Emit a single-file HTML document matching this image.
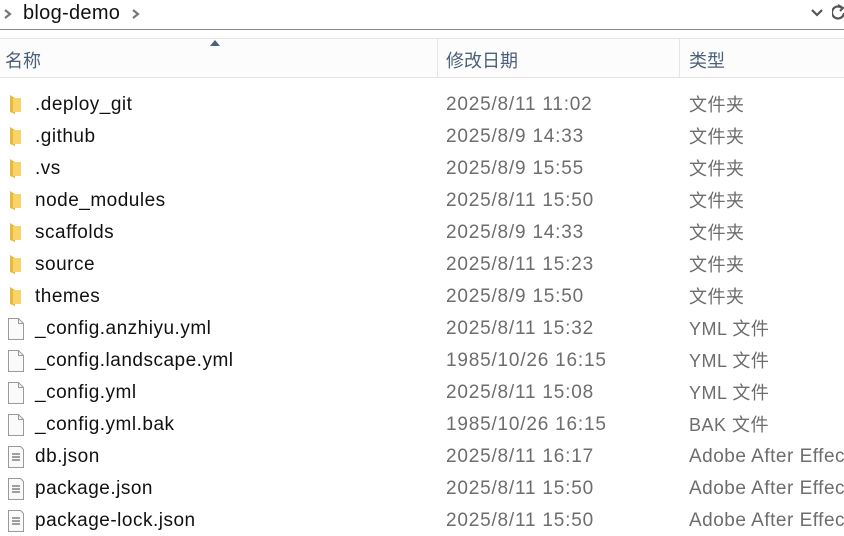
<!DOCTYPE html>
<html><head><meta charset="utf-8"><style>
body{margin:0;width:844px;height:536px;overflow:hidden;background:#fff;font-family:"Liberation Sans","Noto Sans CJK SC",sans-serif;position:relative}
.addr{position:absolute;left:0;top:0;width:844px;height:29px;border-bottom:1px solid #8a8a8a}
.addr .t{position:absolute;left:23px;top:2px;font-size:20px;color:#111;letter-spacing:0.3px}
.hdr{position:absolute;left:0;top:38px;width:844px;height:38px;border-top:1px solid #e5e5e5;border-bottom:1px solid #e5e5e5;background:#fcfcfc}
.hdr span{position:absolute;top:8px;font-size:18px;color:#4c607a}
.sep{position:absolute;top:0;width:1px;height:38px;background:#e5e5e5}
.row{position:absolute;left:0;width:844px;height:32px;font-size:19px;white-space:nowrap;letter-spacing:0.5px}
.row .n{position:absolute;left:35px;top:7px;color:#111}
.row .d{position:absolute;left:446px;top:7px;color:#6d6d6d;letter-spacing:0.8px}
.row .y{position:absolute;left:689px;top:4px;color:#6d6d6d;font-size:18px}
.row svg{position:absolute;left:7px;top:6px}
</style></head><body>
<div class="addr">
<svg style="position:absolute;left:3px;top:8px" width="10" height="12"><path d="M2 2l5 4-5 4" stroke="#777" stroke-width="2.2" fill="none"/></svg>
<span class="t">blog-demo</span>
<svg style="position:absolute;left:131px;top:8px" width="10" height="12"><path d="M2 2l5 4-5 4" stroke="#777" stroke-width="2.2" fill="none"/></svg>
<svg style="position:absolute;left:810px;top:8px" width="14" height="10"><path d="M2 2l5 5 5-5" stroke="#555" stroke-width="2.2" fill="none"/></svg>
<svg style="position:absolute;left:832px;top:4px" width="14" height="18"><path d="M10 4a6 6 0 1 0 2 5" stroke="#555" stroke-width="2.2" fill="none"/><path d="M6 1l5 3-3 3" stroke="#555" stroke-width="2" fill="none"/></svg>
</div>
<div class="hdr">
<svg style="position:absolute;left:209px;top:0px" width="12" height="8"><path d="M1 7L6 1L11 7Z" fill="#4c607a"/></svg>
<span style="left:5px">名称</span>
<div class="sep" style="left:437px"></div>
<span style="left:446px">修改日期</span>
<div class="sep" style="left:679px"></div>
<span style="left:689px">类型</span>
</div>
<div id="rows"></div>
<script>
var F='<svg width="18" height="22"><path d="M3 2l5 3v16l-5-2z" fill="#e8b93a"/><path d="M6 5h8v14H6z" fill="#f7d46a"/></svg>';
var B='<svg width="18" height="24"><path d="M1.5 1.5h10l5 5v16h-15z" fill="#fafafa" stroke="#9a9a9a"/><path d="M11.5 1.5v5h5" fill="none" stroke="#9a9a9a"/></svg>';
var J='<svg width="18" height="24"><path d="M1.5 1.5h12l3 3v18h-15z" fill="#fafafa" stroke="#9a9a9a"/><path d="M5 9h8M5 12h8M5 15h8" stroke="#444"/></svg>';
var d=[[F,'.deploy_git','2025/8/11 11:02','文件夹'],[F,'.github','2025/8/9 14:33','文件夹'],[F,'.vs','2025/8/9 15:55','文件夹'],[F,'node_modules','2025/8/11 15:50','文件夹'],[F,'scaffolds','2025/8/9 14:33','文件夹'],[F,'source','2025/8/11 15:23','文件夹'],[F,'themes','2025/8/9 15:50','文件夹'],[B,'_config.anzhiyu.yml','2025/8/11 15:32','YML 文件'],[B,'_config.landscape.yml','1985/10/26 16:15','YML 文件'],[B,'_config.yml','2025/8/11 15:08','YML 文件'],[B,'_config.yml.bak','1985/10/26 16:15','BAK 文件'],[J,'db.json','2025/8/11 16:17','Adobe After Effects'],[J,'package.json','2025/8/11 15:50','Adobe After Effects'],[J,'package-lock.json','2025/8/11 15:50','Adobe After Effects']];
var h='';d.forEach(function(r,i){h+='<div class="row" style="top:'+(87+i*32)+'px">'+r[0]+'<span class="n">'+r[1]+'</span><span class="d">'+r[2]+'</span><span class="y"'+(r[3].indexOf('Adobe')==0?' style="top:7px;font-size:19px;letter-spacing:0.5px"':'')+'>'+r[3]+'</span></div>';});
document.getElementById('rows').innerHTML=h;
</script>
</body></html>
